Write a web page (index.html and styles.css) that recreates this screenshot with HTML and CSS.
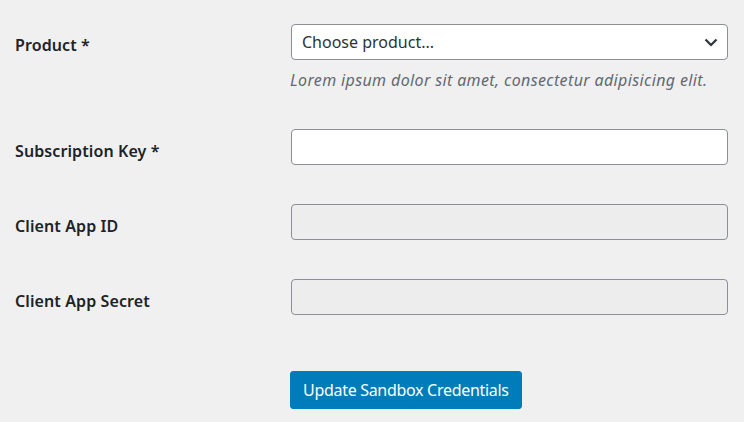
FILE: index.html
```html
<!DOCTYPE html>
<html lang="en">
<head>
<meta charset="utf-8">
<title>Sandbox Credentials</title>
<link rel="stylesheet" href="styles.css">
</head>
<body>
<form class="form">
  <div class="row row-first">
    <label class="label" for="product">Product *</label>
    <div class="field">
      <div class="select">
        <span class="select-text">Choose product...</span>
        <svg class="chevron" width="14" height="9" viewBox="0 0 14 9" aria-hidden="true"><path d="M1.5 1.5 L7 7 L12.5 1.5" fill="none" stroke="#2c3338" stroke-width="2.2"/></svg>
      </div>
      <p class="description">Lorem ipsum dolor sit amet, consectetur adipisicing elit.</p>
    </div>
  </div>
  <div class="row">
    <label class="label" for="key">Subscription Key *</label>
    <div class="field"><input id="key" class="input" type="text"></div>
  </div>
  <div class="row">
    <label class="label" for="appid">Client App ID</label>
    <div class="field"><input id="appid" class="input" type="text" disabled></div>
  </div>
  <div class="row">
    <label class="label" for="secret">Client App Secret</label>
    <div class="field"><input id="secret" class="input" type="text" disabled></div>
  </div>
  <div class="actions">
    <button type="button" class="button">Update Sandbox Credentials</button>
  </div>
</form>
</body>
</html>
```
FILE: styles.css
```css
html, body {
  margin: 0;
  padding: 0;
  background: #f0f0f1;
}
body {
  font-family: "Noto Sans", "Open Sans", sans-serif;
  font-size: 16px;
  color: #1d2327;
}
.form {
  display: flex;
  flex-direction: column;
  gap: 39px;
  padding: 24px 16px 0 15px;
}
.row {
  display: grid;
  grid-template-columns: 276px 437px;
  align-items: start;
}
.label {
  font-weight: 600;
  line-height: 20px;
  padding-top: 12px;
  letter-spacing: 0.1px;
}
.row-first .label {
  padding-top: 11px;
}
.field {
  display: flex;
  flex-direction: column;
}
.select {
  box-sizing: border-box;
  height: 36px;
  background: #fff;
  border: 1px solid #8c8f94;
  border-radius: 4px;
  display: flex;
  align-items: center;
  justify-content: space-between;
  padding: 0 9px 0 10px;
}
.select-text {
  font-size: 16px;
  color: #2c3338;
}
.chevron {
  display: block;
}
.description {
  margin: 10px 0 0 -1px;
  font-style: italic;
  color: #646970;
  line-height: 20px;
  letter-spacing: 0.37px;
}
.input {
  box-sizing: border-box;
  display: block;
  width: 437px;
  height: 36px;
  margin: 0;
  background: #fff;
  border: 1px solid #8c8f94;
  border-radius: 4px;
  font: inherit;
}
.input:disabled {
  background: #ededed;
}
.actions {
  margin-top: 17px;
  padding-left: 275px;
}
.button {
  box-sizing: border-box;
  height: 38px;
  padding: 0 12px;
  background: #007cba;
  border: 1px solid #007cba;
  border-radius: 3px;
  color: #fff;
  font-family: inherit;
  font-size: 16px;
  letter-spacing: -0.3px;
}
```
